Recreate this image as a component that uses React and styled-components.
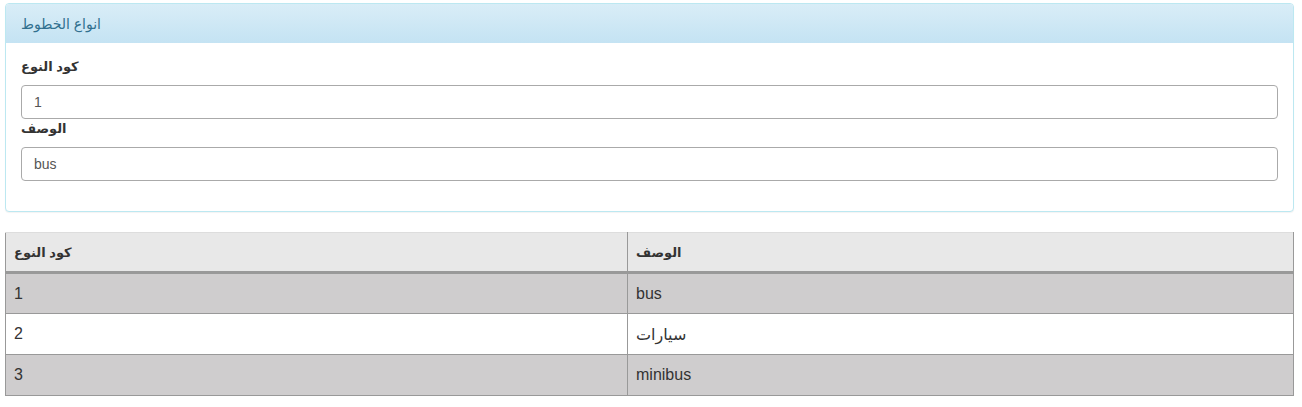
import styled, { createGlobalStyle } from "styled-components";

const GlobalStyle = createGlobalStyle`
  html, body {
    margin: 0;
    padding: 0;
    background: #fff;
  }
  body {
    font-family: "Liberation Sans", "DejaVu Sans", sans-serif;
    font-size: 14px;
    color: #333;
  }
  * {
    box-sizing: border-box;
  }
`;

const types = [
  { code: "1", name: "bus" },
  { code: "2", name: "سيارات" },
  { code: "3", name: "minibus" },
];

const Page = styled.div`
  padding: 3px 8px 0 5px;
`;

const Panel = styled.section`
  border: 1px solid #bce8f1;
  border-radius: 4px;
  background: #fff;
  box-shadow: 0 1px 1px rgba(0, 0, 0, 0.05);
  margin-bottom: 20px;
`;

const PanelHeading = styled.div`
  height: 39px;
  display: flex;
  align-items: center;
  padding: 0 15px;
  color: #31708f;
  font-size: 14px;
  background: linear-gradient(to bottom, #d9edf7 0%, #c4e3f3 100%);
  border-radius: 3px 3px 0 0;
`;

const PanelBody = styled.div`
  padding: 14px 15px 30px;
`;

const Label = styled.label`
  display: block;
  font-weight: bold;
  font-size: 13px;
  line-height: 20px;
  margin-bottom: 8px;
  color: #333;
`;

const Input = styled.input`
  display: block;
  width: 100%;
  height: 34px;
  padding: 6px 12px;
  font-family: inherit;
  font-size: 14px;
  color: #555;
  background: #fff;
  border: 1px solid #aaa;
  border-radius: 4px;
  outline: none;
`;

const Table = styled.table`
  width: 100%;
  border-collapse: collapse;
  table-layout: fixed;
  border-left: 1px solid #999;
  border-right: 1px solid #999;
  border-top: 1px solid #ddd;
`;

const Th = styled.th`
  text-align: left;
  font-size: 13px;
  font-weight: bold;
  color: #333;
  background: #e8e8e8;
  height: 40px;
  padding: 0 8px;
  border-bottom: 3px solid #999;
  & + & {
    border-left: 1px solid #999;
  }
`;

const Row = styled.tr`
  background: ${(p) => (p.$odd ? "#cfcdce" : "#fff")};
`;

const Td = styled.td`
  font-size: 16px;
  color: #333;
  height: 41px;
  padding: 0 8px;
  border-bottom: 1px solid #999;
  & + & {
    border-left: 1px solid #999;
  }
`;

export default function App() {
  return (
    <Page>
      <GlobalStyle />
      <Panel>
        <PanelHeading>انواع الخطوط</PanelHeading>
        <PanelBody>
          <Label>كود النوع</Label>
          <Input defaultValue="1" />
          <Label>الوصف</Label>
          <Input defaultValue="bus" />
        </PanelBody>
      </Panel>

      <Table>
        <colgroup>
          <col style={{ width: 622 }} />
          <col />
        </colgroup>
        <thead>
          <tr>
            <Th>كود النوع</Th>
            <Th>الوصف</Th>
          </tr>
        </thead>
        <tbody>
          {types.map((t, i) => (
            <Row key={t.code} $odd={i % 2 === 0}>
              <Td>{t.code}</Td>
              <Td>{t.name}</Td>
            </Row>
          ))}
        </tbody>
      </Table>
    </Page>
  );
}
